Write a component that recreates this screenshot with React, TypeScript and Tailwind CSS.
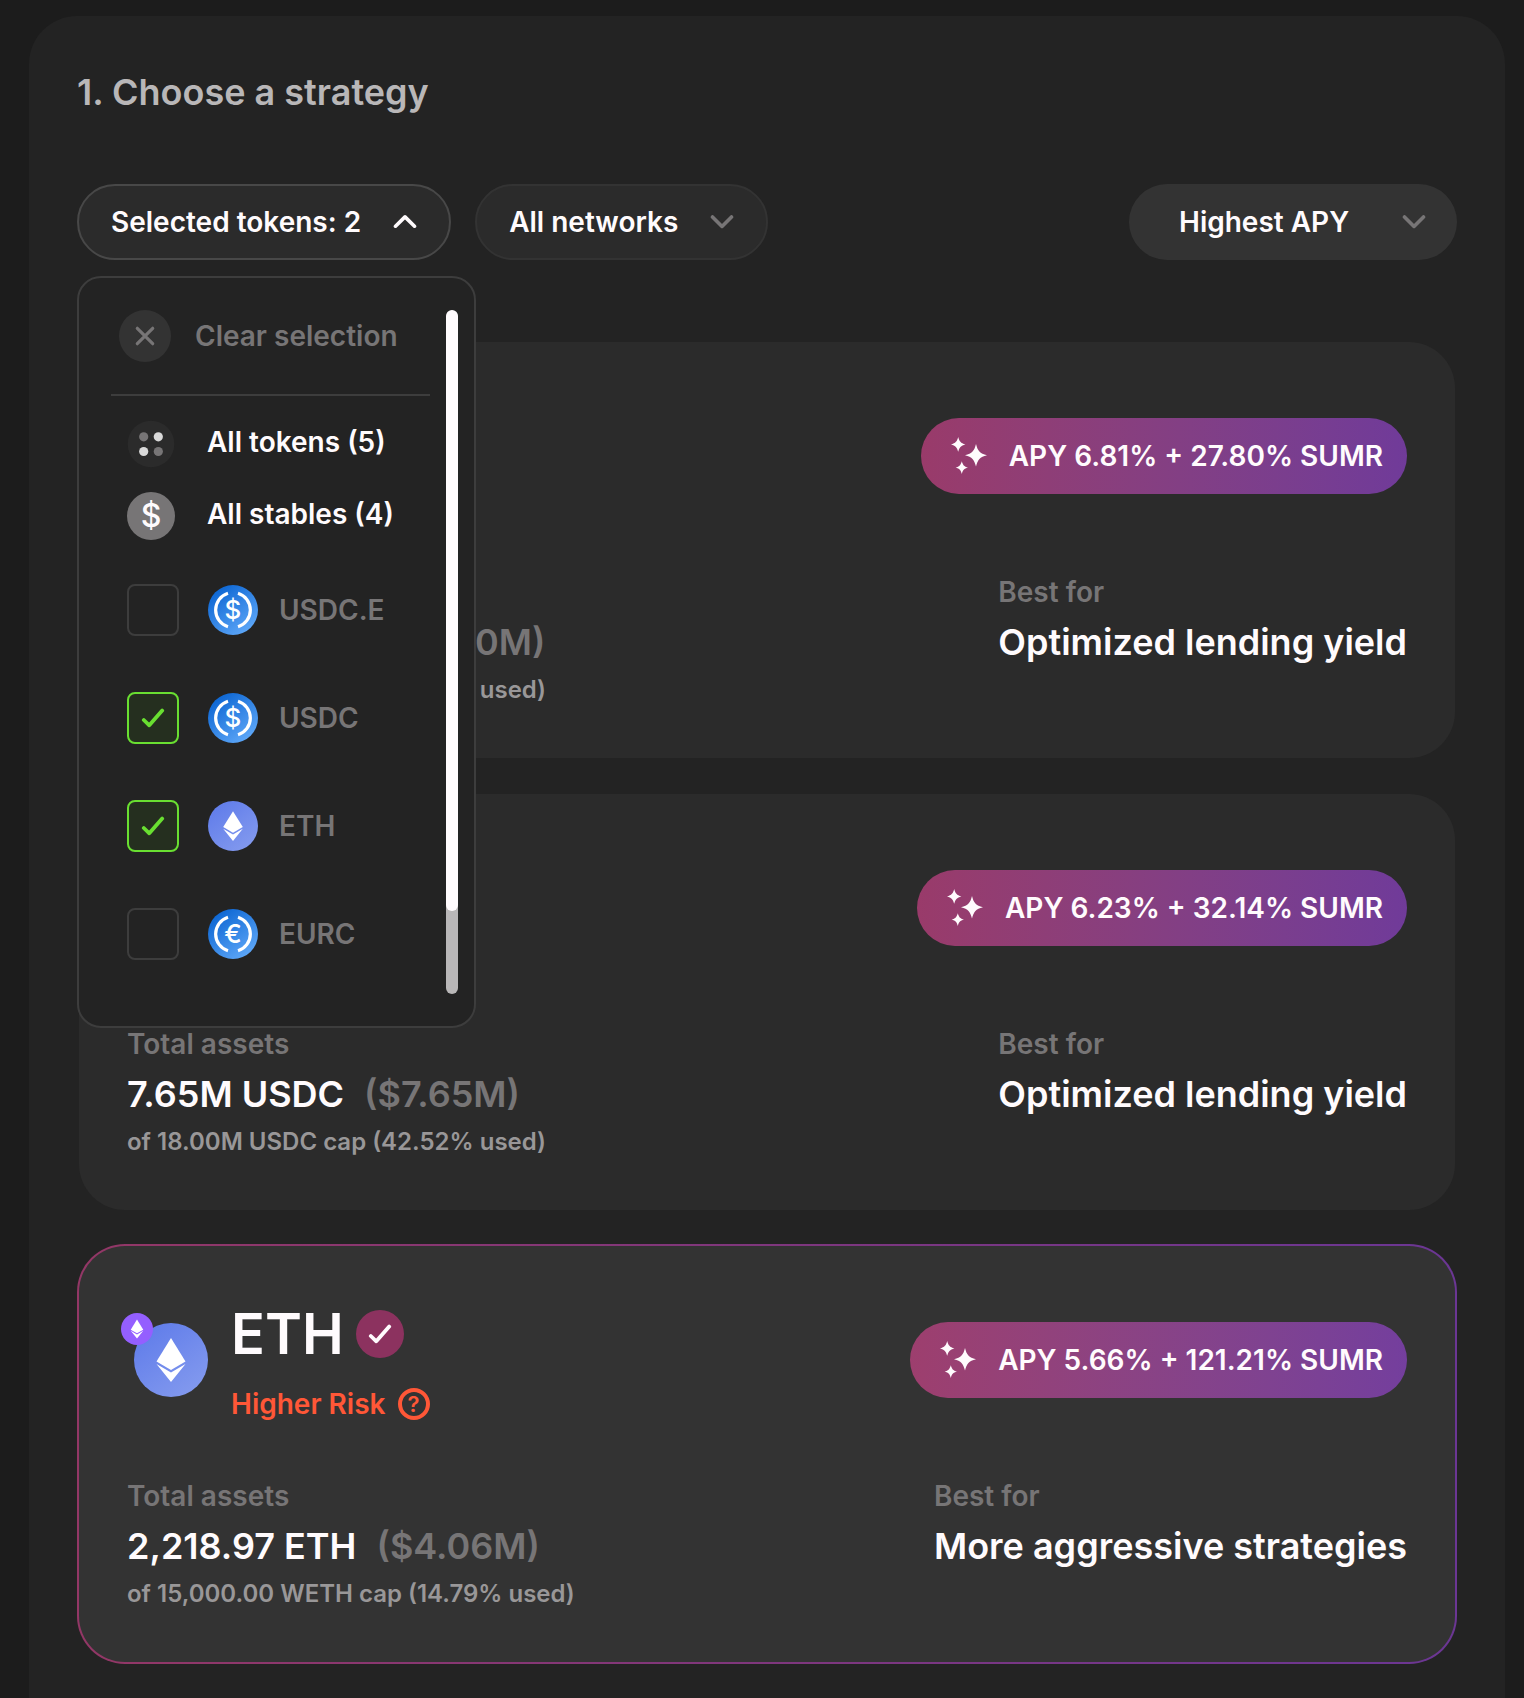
import { useId, useState } from "react";
import clsx from "clsx";

type Token = "USDC" | "ETH" | "EURC";

const tokenOptions: { id: string; icon: Token }[] = [
  { id: "USDC.E", icon: "USDC" },
  { id: "USDC", icon: "USDC" },
  { id: "ETH", icon: "ETH" },
  { id: "EURC", icon: "EURC" },
];

const strategies = [
  {
    id: "usdc-arbitrum",
    token: "USDC" as Token,
    risk: "Lower Risk",
    apy: "APY 6.81% + 27.80% SUMR",
    total: "11.70M USDC",
    usd: "($11.70M)",
    cap: "of 18.00M USDC cap (65.00% used)",
    bestFor: "Optimized lending yield",
  },
  {
    id: "usdc-base",
    token: "USDC" as Token,
    risk: "Lower Risk",
    apy: "APY 6.23% + 32.14% SUMR",
    total: "7.65M USDC",
    usd: "($7.65M)",
    cap: "of 18.00M USDC cap (42.52% used)",
    bestFor: "Optimized lending yield",
  },
  {
    id: "eth-mainnet",
    token: "ETH" as Token,
    risk: "Higher Risk",
    apy: "APY 5.66% + 121.21% SUMR",
    total: "2,218.97 ETH",
    usd: "($4.06M)",
    cap: "of 15,000.00 WETH cap (14.79% used)",
    bestFor: "More aggressive strategies",
  },
];

function TokenIcon({ token, className }: { token: Token; className?: string }) {
  const id = useId();
  const isEth = token === "ETH";

  return (
    <svg viewBox="0 0 50 50" className={clsx("shrink-0", className)} aria-hidden="true">
      <defs>
        <linearGradient id={id} x1="0.2" y1="0.1" x2="0.8" y2="0.9">
          <stop offset="0" stopColor={isEth ? "#627eea" : "#0f68d4"} />
          <stop offset="1" stopColor={isEth ? "#8198ee" : "#5ba5f7"} />
        </linearGradient>
      </defs>
      <circle cx="25" cy="25" r="25" fill={`url(#${id})`} />
      {isEth ? (
        <EthDiamond />
      ) : (
        <>
          <path
            d="M20 8.2a17.6 17.6 0 0 0 0 33.6M30 8.2a17.6 17.6 0 0 1 0 33.6"
            fill="none"
            stroke="#fff"
            strokeWidth="3.2"
          />
          <text
            x="25"
            y="34.4"
            textAnchor="middle"
            fill="#fff"
            className="font-['Inter',sans-serif] text-[26px] font-medium"
          >
            {token === "EURC" ? "€" : "$"}
          </text>
        </>
      )}
    </svg>
  );
}

function EthDiamond() {
  return (
    <g fill="#fff">
      <path d="M25 10.2 34.8 26 25 31.7 15.2 26z" />
      <path d="M15.2 27.7 25 33.5l9.8-5.8L25 39.9z" />
    </g>
  );
}

function NetworkBadge() {
  return (
    <svg viewBox="0 0 50 50" className="absolute -top-[10px] -left-[13px] size-8" aria-hidden="true">
      <circle cx="25" cy="25" r="25" fill="#945fff" />
      <EthDiamond />
    </svg>
  );
}

function Chevron({ up = false, className }: { up?: boolean; className?: string }) {
  return (
    <svg
      viewBox="0 0 24 14"
      className={clsx("h-[14px] w-6 shrink-0", className)}
      fill="none"
      stroke="currentColor"
      strokeWidth="3.6"
      strokeLinecap="round"
      strokeLinejoin="round"
      aria-hidden="true"
    >
      <path d={up ? "M2.5 11.2 12 1.900l9.5 9.300" : "M2.5 1.900 12 11.400l9.5-9.500"} />
    </svg>
  );
}

function Check({ className }: { className?: string }) {
  return (
    <svg
      viewBox="0 0 24 20"
      className={className}
      fill="none"
      stroke="currentColor"
      strokeWidth="3.8"
      strokeLinecap="round"
      strokeLinejoin="round"
      aria-hidden="true"
    >
      <path d="M2.8 12 8.3 17.3 21.2 2.6" />
    </svg>
  );
}

function Sparkles() {
  return (
    <svg viewBox="0 0 36 38" className="h-[38px] w-9 shrink-0" fill="currentColor" aria-hidden="true">
      <path d="M7.2 0C8.300 4.300 9.800 6.200 14.4 7.4 9.800 8.600 8.300 10.500 7.200 14.8 6.100 10.500 4.600 8.600 0 7.400 4.600 6.200 6.100 4.300 7.200 0z" />
      <path d="M25 7C26.700 13.800 28.800 16.600 36 18.300 28.800 20 26.700 22.800 25 29.600 23.300 22.800 21.200 20 14 18.300 21.200 16.600 23.300 13.800 25 7z" />
      <path d="M10.8 24.200C11.800 27.800 13 29.500 17 30.600 13 31.700 11.800 33.400 10.800 37 9.800 33.400 8.600 31.700 4.600 30.600 8.600 29.500 9.800 27.800 10.800 24.200z" />
    </svg>
  );
}

function TokenMenu({
  selected,
  onToggle,
  onChange,
}: {
  selected: string[];
  onToggle: (id: string) => void;
  onChange: (ids: string[]) => void;
}) {
  return (
    <div className="absolute top-full left-0 z-10 mt-4 flex h-[752px] w-[399px] gap-4 rounded-[24px] border-2 border-[#3d3d3d] bg-[#232323] py-8 pr-4 pl-8">
      <div className="flex-1">
        <button
          type="button"
          className="flex items-center gap-6 pl-2 text-[#777576]"
          onClick={() => onChange([])}
        >
          <span className="flex size-[52px] items-center justify-center rounded-full bg-[#333333]">
            <svg viewBox="0 0 20 20" className="size-5" stroke="currentColor" strokeWidth="3.2" strokeLinecap="round" aria-hidden="true">
              <path d="M2.3 2.3 17.7 17.7M17.7 2.3 2.3 17.7" />
            </svg>
          </span>
          Clear selection
        </button>
        <hr className="mt-8 mb-3 border-t-2 border-[#3d3d3d]" />
        <button
          type="button"
          className="flex h-[72px] items-center gap-8 pl-4"
          onClick={() => onChange(tokenOptions.map((t) => t.id))}
        >
          <svg viewBox="0 0 48 48" className="size-12" aria-hidden="true">
            <circle cx="24" cy="24" r="23.3" fill="#2b2b2b" />
            <circle cx="16.7" cy="16.8" r="4.6" fill="#777576" />
            <circle cx="31.3" cy="16.8" r="4.6" fill="#d9d9d9" />
            <circle cx="16.7" cy="31.5" r="4.6" fill="#d9d9d9" />
            <circle cx="31.3" cy="31.5" r="4.6" fill="#777576" />
          </svg>
          <span className="pb-1">All tokens (5)</span>
        </button>
        <button
          type="button"
          className="flex h-[72px] items-center gap-8 pl-4"
          onClick={() => onChange(tokenOptions.map((t) => t.id).filter((id) => id !== "ETH"))}
        >
          <span className="flex size-12 items-center justify-center rounded-full bg-[#777576] text-[32px] leading-none font-medium">
            $
          </span>
          <span className="pb-1">All stables (4)</span>
        </button>
        <ul className="mt-1">
          {tokenOptions.map((token) => (
            <li key={token.id}>
              <label className="flex h-[108px] items-center pl-4 text-[#777576]">
                <span className="grid size-[52px] place-items-center">
                  <input
                    type="checkbox"
                    checked={selected.includes(token.id)}
                    onChange={() => onToggle(token.id)}
                    className="peer col-start-1 row-start-1 size-[52px] appearance-none rounded-[8px] border-2 border-[#3d3d3d] checked:border-[#69df31] checked:bg-[#252f1f]"
                  />
                  <Check className="pointer-events-none col-start-1 row-start-1 hidden h-5 w-6 text-[#69df31] peer-checked:block" />
                </span>
                <span className="ml-7 flex w-[52px] justify-center">
                  <TokenIcon token={token.icon} className="size-[50px]" />
                </span>
                <span className="ml-5">{token.id}</span>
              </label>
            </li>
          ))}
        </ul>
      </div>
      <div className="w-3 overflow-hidden rounded-full bg-[#b9b7b8]">
        <div className="h-[601px] rounded-full bg-[#fffbfd]" />
      </div>
    </div>
  );
}

function StrategyCard({
  strategy,
  active,
}: {
  strategy: (typeof strategies)[number];
  active: boolean;
}) {
  const isEth = strategy.token === "ETH";

  return (
    <article
      className={clsx(
        "rounded-[48px] border-2 border-transparent p-12",
        active
          ? "[background:linear-gradient(#333333,#333333)_padding-box,linear-gradient(90deg,#933766,#6b3694)_border-box]"
          : "bg-[#2b2b2b] bg-clip-padding",
      )}
    >
      <div className="flex items-center justify-between">
        <div className="flex items-center gap-[23px] pl-[7px]">
          <div className="relative">
            <TokenIcon token={strategy.token} className="size-[74px]" />
            <NetworkBadge />
          </div>
          <div className="flex flex-col gap-2">
            <div className="flex h-20 items-center gap-3">
              <h2 className="text-[56px] leading-[80px]">{strategy.token}</h2>
              <span className="flex size-12 items-center justify-center rounded-full bg-[#8c325f]">
                <Check className="h-5 w-6" />
              </span>
            </div>
            <p className={clsx("flex items-center gap-3 leading-[44px]", isEth ? "text-[#ff5737]" : "text-[#69df31]")}>
              {strategy.risk}
              <span className="flex size-8 items-center justify-center rounded-full border-4 border-current text-[22px] leading-none">
                ?
              </span>
            </p>
          </div>
        </div>
        <div className="flex h-[76px] items-center gap-[22px] rounded-full bg-linear-to-r from-[#ff49a4]/52 to-[#b049ff]/52 pr-6 pl-[30px]">
          <Sparkles />
          {strategy.apy}
        </div>
      </div>
      <div className="mt-12 flex justify-between">
        <div>
          <p className="leading-[44px] text-[#777576]">Total assets</p>
          <p className="flex gap-5 text-[36px] leading-[56px]">
            {strategy.total}
            <span className="text-[#777576]">{strategy.usd}</span>
          </p>
          <p className="text-[24px] leading-[40px] text-[#999798]">{strategy.cap}</p>
        </div>
        <div>
          <p className="leading-[44px] text-[#777576]">Best for</p>
          <p className="text-[36px] leading-[56px]">{strategy.bestFor}</p>
        </div>
      </div>
    </article>
  );
}

export default function App() {
  const [open, setOpen] = useState(true);
  const [selected, setSelected] = useState(["USDC", "ETH"]);
  const [sort, setSort] = useState("Highest APY");

  const toggle = (id: string) => {
    setSelected((prev) => (prev.includes(id) ? prev.filter((t) => t !== id) : [...prev, id]));
  };

  return (
    <main className="flex min-h-screen flex-col bg-[#1c1c1c] pt-4 pr-[19px] pl-[29px] font-['Inter',sans-serif] text-[28px] leading-[44px] font-semibold text-[#fffbfd]">
      <section className="flex-1 rounded-t-[48px] bg-[#232323] px-12 pt-12 pb-8">
        <h1 className="text-[36px] leading-[56px] text-[#b9b7b8]">1. Choose a strategy</h1>

        <div className="mt-16 flex items-center justify-between">
          <div className="flex gap-6">
            <div className="relative">
              <button
                type="button"
                aria-expanded={open}
                onClick={() => setOpen(!open)}
                className="flex h-[76px] items-center gap-8 rounded-full border-2 border-[#484848] bg-[#2b2b2b] px-8"
              >
                Selected tokens: {selected.length}
                <Chevron up={open} />
              </button>
              {open && <TokenMenu selected={selected} onToggle={toggle} onChange={setSelected} />}
            </div>
            <button
              type="button"
              aria-haspopup="listbox"
              className="flex h-[76px] items-center gap-8 rounded-full border-2 border-[#333333] bg-[#2b2b2b] px-8"
            >
              All networks
              <Chevron className="text-[#777576]" />
            </button>
          </div>
          <div className="grid items-center">
            <select
              aria-label="Sort by"
              value={sort}
              onChange={(e) => setSort(e.target.value)}
              className="col-start-1 row-start-1 h-[76px] w-[328px] appearance-none rounded-full bg-[#333333] pl-[50px]"
            >
              <option>Highest APY</option>
              <option>Highest TVL</option>
            </select>
            <Chevron className="pointer-events-none col-start-1 row-start-1 mr-[31px] justify-self-end text-[#777576]" />
          </div>
        </div>

        <div className="mt-20 flex flex-col gap-8">
          {strategies.map((strategy) => (
            <StrategyCard key={strategy.id} strategy={strategy} active={strategy.token === "ETH"} />
          ))}
        </div>
      </section>
    </main>
  );
}
